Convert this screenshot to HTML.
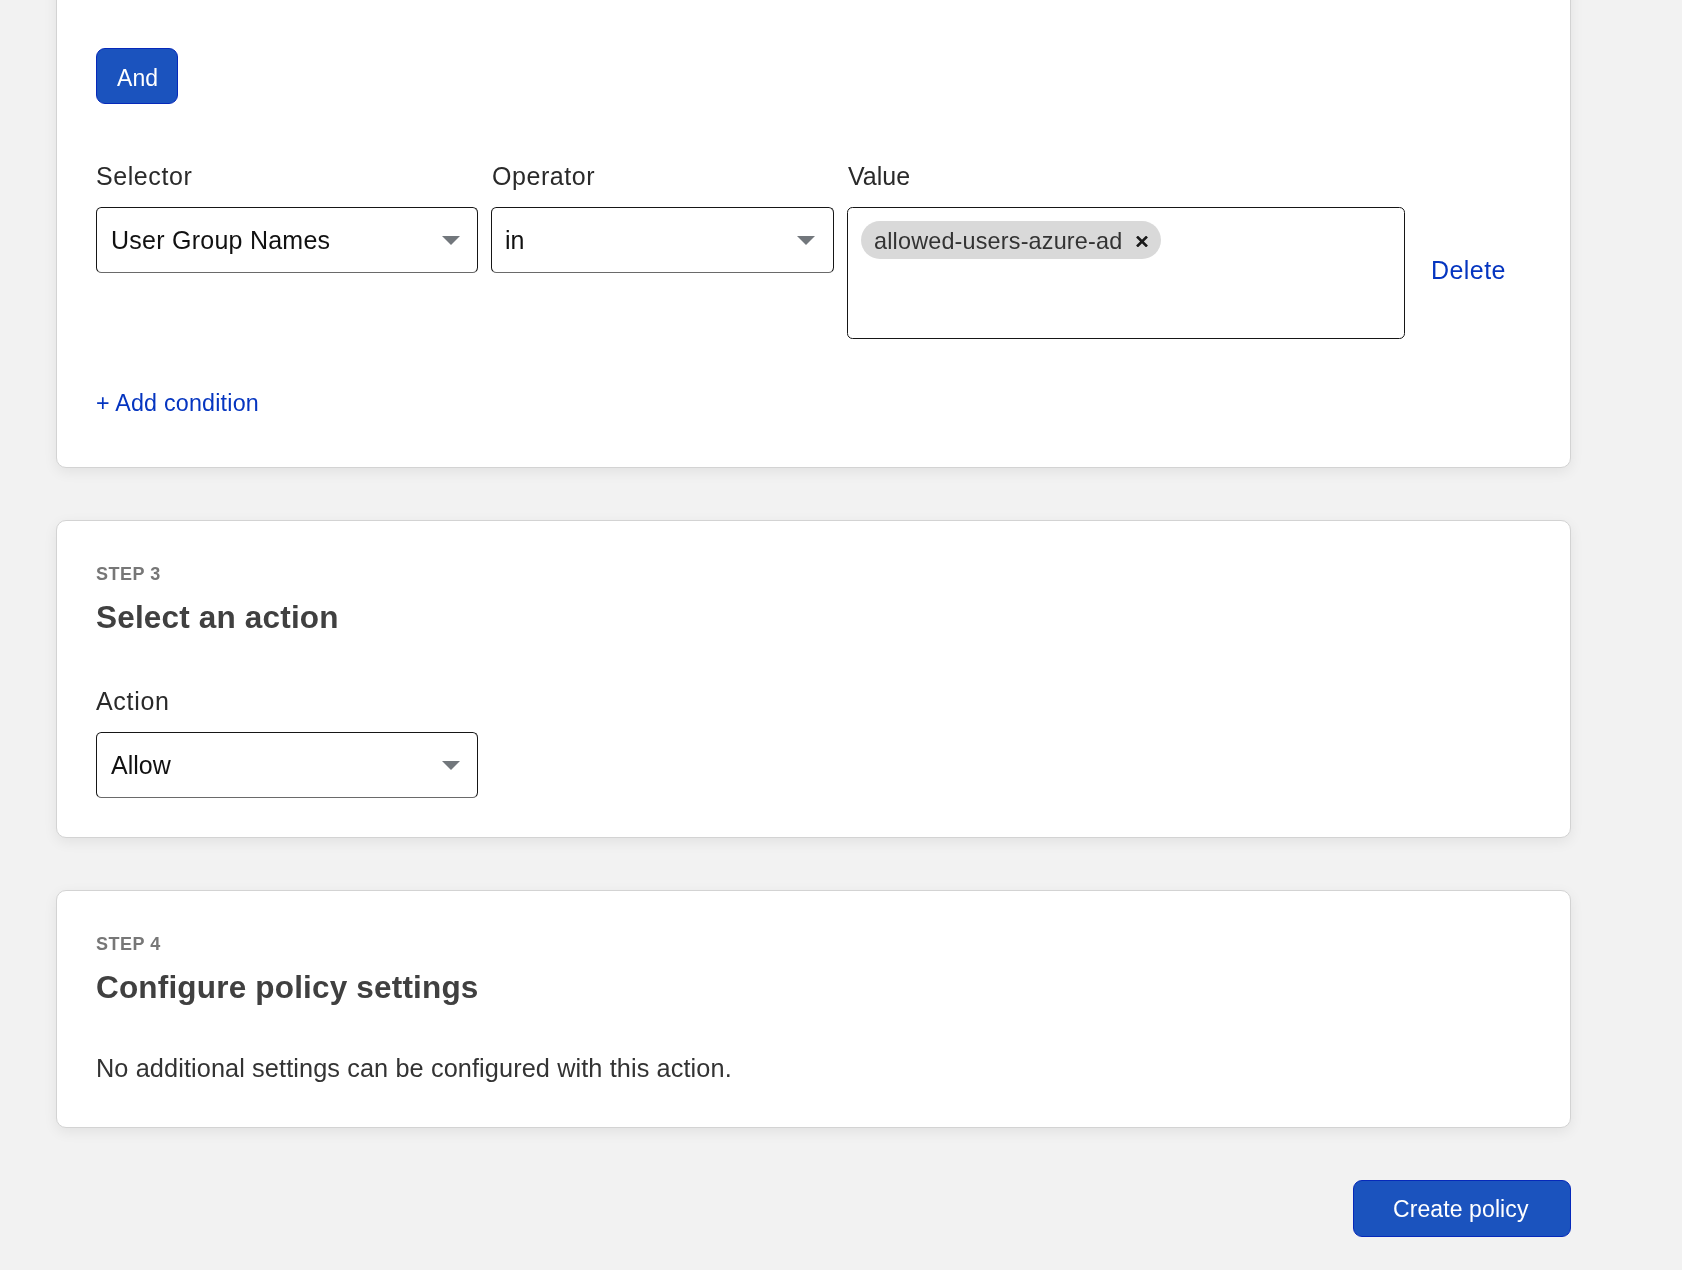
<!DOCTYPE html>
<html>
<head>
<meta charset="utf-8">
<style>
html,body{margin:0;padding:0;}
body{width:1682px;height:1270px;background:#f2f2f2;position:relative;overflow:hidden;font-family:"Liberation Sans",sans-serif;}
.card{position:absolute;left:56px;width:1513px;background:#fff;border:1px solid #d3d3d3;border-radius:10px;box-shadow:0 4px 14px rgba(0,0,0,0.07);}
.t{position:absolute;white-space:nowrap;line-height:1;will-change:transform;}
.btn{position:absolute;background:#1b53be;border:1px solid #0629ba;border-radius:9px;color:#fff;box-sizing:border-box;}
.sel{position:absolute;box-sizing:border-box;background:#fff;border:1px solid #161616;border-bottom-color:#6a6a6a;border-radius:5.5px;}
.arrow{position:absolute;width:0;height:0;border-left:9px solid transparent;border-right:9px solid transparent;border-top:9.5px solid #72777c;}
.link{color:#0535c0;}
</style>
</head>
<body>
<!-- card 1 -->
<div class="card" style="top:-40px;height:506px;"></div>
<div class="btn" style="left:96px;top:48px;width:82px;height:56px;"></div>
<div class="t" style="left:117px;top:67px;font-size:23px;letter-spacing:0.1px;color:#fff;">And</div>

<div class="t" style="left:96px;top:164px;font-size:25px;letter-spacing:0.57px;color:#2a2a2a;">Selector</div>
<div class="t" style="left:492px;top:164px;font-size:25px;letter-spacing:0.55px;color:#2a2a2a;">Operator</div>
<div class="t" style="left:848px;top:164px;font-size:25px;color:#2a2a2a;">Value</div>

<div class="sel" style="left:96px;top:207px;width:382px;height:66px;"></div>
<div class="t" style="left:111px;top:228px;font-size:25px;letter-spacing:0.25px;color:#111;">User Group Names</div>
<div class="arrow" style="left:442px;top:236px;"></div>

<div class="sel" style="left:491px;top:207px;width:343px;height:66px;"></div>
<div class="t" style="left:505px;top:228px;font-size:25px;color:#111;">in</div>
<div class="arrow" style="left:797px;top:236px;"></div>

<div class="sel" style="left:847px;top:207px;width:558px;height:132px;border-bottom-color:#161616;"></div>
<div style="position:absolute;left:861px;top:221px;width:300px;height:38px;border-radius:19px;background:#d9d9d9;"></div>
<div class="t" style="left:874px;top:230px;font-size:23.4px;letter-spacing:0.18px;color:#333;">allowed-users-azure-ad</div>
<svg style="position:absolute;left:1136px;top:236px;" width="12" height="11" viewBox="0 0 12 11"><path d="M1 0.5 L11 10.5 M11 0.5 L1 10.5" stroke="#1a1a1a" stroke-width="2.6"/></svg>

<div class="t link" style="left:1431px;top:258px;font-size:25px;letter-spacing:0.45px;">Delete</div>
<div class="t link" style="left:96px;top:392px;font-size:23.3px;letter-spacing:0.2px;">+ Add condition</div>

<!-- card 2 -->
<div class="card" style="top:520px;height:316px;"></div>
<div class="t" style="left:96px;top:565px;font-size:18px;font-weight:700;letter-spacing:0.5px;color:#777;">STEP 3</div>
<div class="t" style="left:96px;top:602px;font-size:31.5px;font-weight:700;letter-spacing:0.18px;color:#404040;">Select an action</div>
<div class="t" style="left:96px;top:689px;font-size:25px;letter-spacing:0.7px;color:#2a2a2a;">Action</div>
<div class="sel" style="left:96px;top:732px;width:382px;height:66px;"></div>
<div class="t" style="left:111px;top:753px;font-size:25px;color:#111;">Allow</div>
<div class="arrow" style="left:442px;top:761px;"></div>

<!-- card 3 -->
<div class="card" style="top:890px;height:236px;"></div>
<div class="t" style="left:96px;top:935px;font-size:18px;font-weight:700;letter-spacing:0.5px;color:#777;">STEP 4</div>
<div class="t" style="left:96px;top:972px;font-size:31.5px;font-weight:700;letter-spacing:0.18px;color:#404040;">Configure policy settings</div>
<div class="t" style="left:96px;top:1056px;font-size:25.3px;letter-spacing:0.1px;color:#333;">No additional settings can be configured with this action.</div>

<div class="btn" style="left:1353px;top:1180px;width:218px;height:57px;"></div>
<div class="t" style="left:1393px;top:1198px;font-size:23px;letter-spacing:0.1px;color:#fff;">Create policy</div>
</body>
</html>
